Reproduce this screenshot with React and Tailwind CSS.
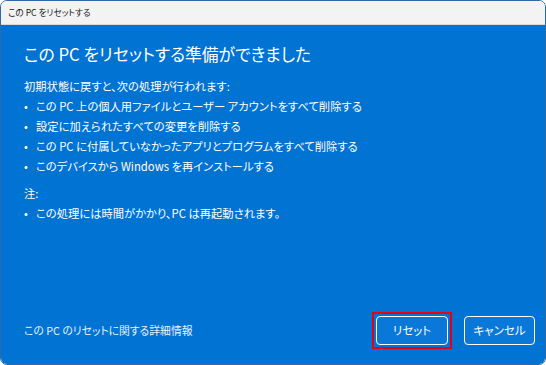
export default function App() {
  const font = "font-['Yu_Gothic_UI','Noto_Sans_CJK_JP',sans-serif] [font-feature-settings:'palt']";
  const items = [
    "この PC 上の個人用ファイルとユーザー アカウントをすべて削除する",
    "設定に加えられたすべての変更を削除する",
    "この PC に付属していなかったアプリとプログラムをすべて削除する",
    "このデバイスから Windows を再インストールする",
  ];
  return (
    <div className={`w-[546px] h-[365px] bg-white ${font}`}>
      <div className="w-full h-full flex flex-col rounded-[7px] overflow-hidden border border-[#2f6aa8]">
        <div className="h-[24px] shrink-0 bg-[#f3f3f3] border-b border-[#d9d9d9] flex items-center px-[7px] text-[8.6px] text-[#1a1a1a]">
          この PC をリセットする
        </div>
        <div className="flex-1 bg-[#0173d3] text-white flex flex-col pl-[23px] pr-[10px]">
          <h1 className="mt-[16px] text-[16.8px] leading-[26px] font-normal">
            この PC をリセットする準備ができました
          </h1>
          <div className="mt-[9px] text-[11.3px] leading-[20px]">
            <p>初期状態に戻すと、次の処理が行われます:</p>
            <ul>
              {items.map((t) => (
                <li key={t} className="flex">
                  <span className="w-[12px] shrink-0">•</span>
                  <span>{t}</span>
                </li>
              ))}
            </ul>
            <p className="mt-[7px]">注:</p>
            <ul>
              <li className="flex">
                <span className="w-[12px] shrink-0">•</span>
                <span>この処理には時間がかかり、PC は再起動されます。</span>
              </li>
            </ul>
          </div>
          <div className="mt-auto mb-[15px] flex items-center">
            <span className="text-[10.8px] text-[#e6f0fb]">この PC のリセットに関する詳細情報</span>
            <div className="ml-auto flex items-center gap-[12px]">
              <div className="border-2 border-[#e60012] p-[2px]">
                <button className="w-[72px] h-[29px] rounded-[4px] border-[1.5px] border-white bg-[#0a78d8] text-white text-[11.5px] font-normal">
                  リセット
                </button>
              </div>
              <button className="w-[71px] h-[29px] rounded-[4px] border-[1.5px] border-white bg-[#0a78d8] text-white text-[11.5px] font-normal">
                キャンセル
              </button>
            </div>
          </div>
        </div>
      </div>
    </div>
  );
}
